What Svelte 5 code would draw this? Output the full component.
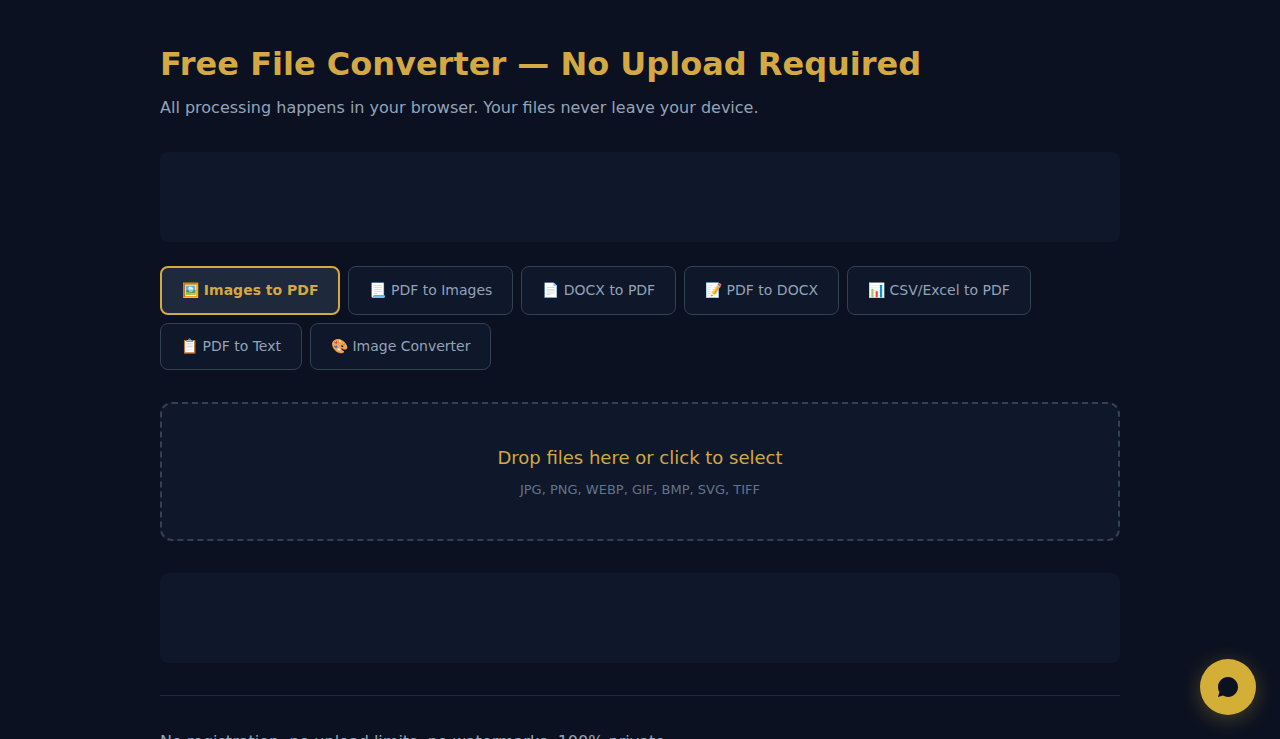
<script lang="ts">
  type Tool = {
    id: string;
    icon: string;
    label: string;
    accept: string;
    hint: string;
  };

  const tools: Tool[] = [
    { id: 'img2pdf', icon: '🖼️', label: 'Images to PDF', accept: 'image/*', hint: 'JPG, PNG, WEBP, GIF, BMP, SVG, TIFF' },
    { id: 'pdf2img', icon: '📃', label: 'PDF to Images', accept: '.pdf', hint: 'PDF' },
    { id: 'docx2pdf', icon: '📄', label: 'DOCX to PDF', accept: '.docx', hint: 'DOCX' },
    { id: 'pdf2docx', icon: '📝', label: 'PDF to DOCX', accept: '.pdf', hint: 'PDF' },
    { id: 'csv2pdf', icon: '📊', label: 'CSV/Excel to PDF', accept: '.csv,.xls,.xlsx', hint: 'CSV, XLS, XLSX' },
    { id: 'pdf2text', icon: '📋', label: 'PDF to Text', accept: '.pdf', hint: 'PDF' },
    { id: 'imgconv', icon: '🎨', label: 'Image Converter', accept: 'image/*', hint: 'JPG, PNG, WEBP, GIF, BMP' }
  ];

  let activeId = $state('img2pdf');
  let fileInput: HTMLInputElement;

  const active = $derived(tools.find((tool) => tool.id === activeId) ?? tools[0]);
</script>

<main>
  <h1>Free File Converter — No Upload Required</h1>
  <p class="subtitle">All processing happens in your browser. Your files never leave your device.</p>

  <div class="banner"></div>

  <div class="tabs">
    {#each tools as tool}
      <button class:active={tool.id === activeId} onclick={() => (activeId = tool.id)}>{tool.icon} {tool.label}</button>
    {/each}
  </div>

  <button class="dropzone" onclick={() => fileInput.click()}>
    <span class="drop-title">Drop files here or click to select</span>
    <span class="drop-hint">{active.hint}</span>
  </button>
  <input bind:this={fileInput} type="file" accept={active.accept} aria-label="Files" multiple hidden />

  <div class="banner"></div>

  <footer>
    <p>No registration, no upload limits, no watermarks. 100% private.</p>
  </footer>
</main>

<button class="chat" aria-label="Chat">
  <svg viewBox="0 0 24 24" width="24" height="24" fill="currentColor" aria-hidden="true">
    <path d="M12 2C6.48 2 2 6.48 2 12c0 1.85.5 3.58 1.38 5.06L2 22l4.94-1.38A9.96 9.96 0 0 0 12 22c5.52 0 10-4.48 10-10S17.52 2 12 2z" />
  </svg>
</button>

<style>
  :global(body) {
    margin: 0;
    background: #0b1120;
    color: #e2e8f0;
    font-family: 'DejaVu Sans', sans-serif;
  }

  main {
    max-width: 960px;
    margin: 0 auto;
    padding: 40px 16px;
  }

  h1 {
    margin: 0 0 8px;
    color: #d4a843;
    font-size: 32px;
    line-height: 48px;
  }

  p {
    margin: 0;
    color: #94a3b8;
    font-size: 16px;
    line-height: 24px;
  }

  .banner {
    height: 90px;
    margin: 32px 0 24px;
    border-radius: 8px;
    background: #0f172a;
  }

  .tabs {
    display: flex;
    flex-wrap: wrap;
    gap: 8px;
    margin-bottom: 32px;
  }

  .tabs button {
    padding: 14px 20px;
    border: 1px solid #334155;
    border-radius: 8px;
    background: #0f172a;
    color: #94a3b8;
    font: inherit;
    font-size: 14px;
    line-height: 17px;
    cursor: pointer;
  }

  .tabs button.active {
    border: 2px solid #d4a843;
    background: #1e293b;
    color: #d4a843;
    font-weight: 600;
  }

  .dropzone {
    box-sizing: border-box;
    display: flex;
    flex-direction: column;
    align-items: center;
    gap: 8px;
    width: 100%;
    padding: 40px;
    border: 2px dashed #334155;
    border-radius: 12px;
    background: #0f172a;
    font: inherit;
    cursor: pointer;
  }

  .drop-title {
    color: #d4a843;
    font-size: 18px;
    line-height: 28px;
  }

  .drop-hint {
    color: #64748b;
    font-size: 13px;
    line-height: 19px;
  }

  .dropzone ~ .banner {
    margin: 32px 0;
  }

  footer {
    padding-top: 32px;
    border-top: 1px solid #1e293b;
  }

  footer p {
    line-height: 28px;
  }

  .chat {
    position: fixed;
    right: 24px;
    bottom: 24px;
    display: grid;
    place-items: center;
    width: 56px;
    height: 56px;
    padding: 0;
    border: none;
    border-radius: 50%;
    background: #d4af37;
    color: #0b1120;
    box-shadow: 0 4px 20px rgba(212, 175, 55, 0.3);
    cursor: pointer;
  }
</style>
